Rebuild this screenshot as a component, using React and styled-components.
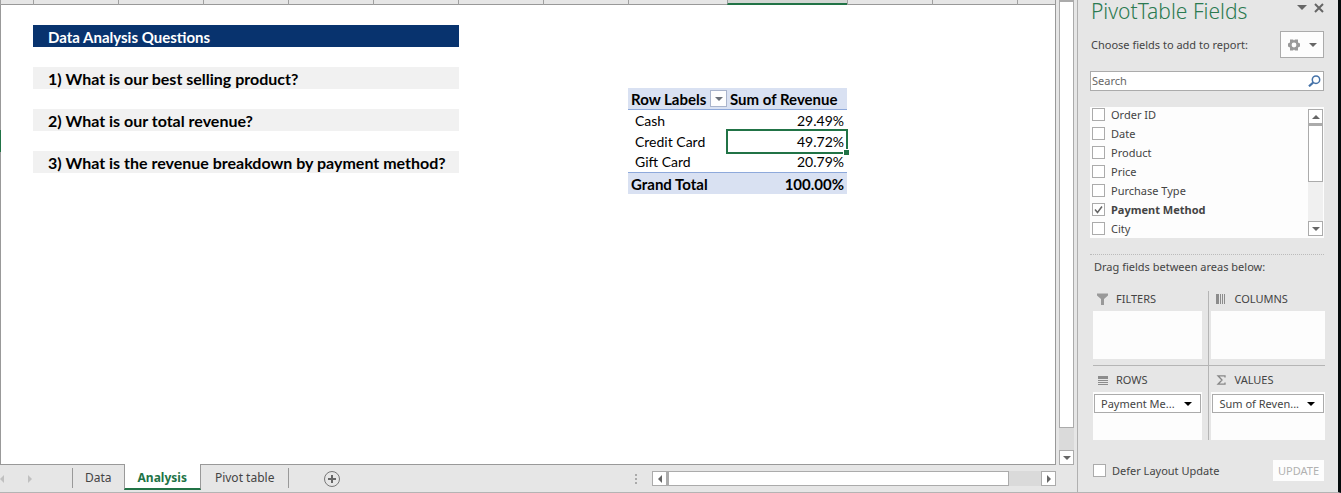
import React, { useState } from "react";
import styled, { createGlobalStyle, css } from "styled-components";

const GlobalStyle = createGlobalStyle`
  *, *::before, *::after { box-sizing: border-box; }
  body { margin: 0; background: #e6e6e6; }
  button, input { font: inherit; color: inherit; margin: 0; }
  h1, h2, h3, p, ul { margin: 0; padding: 0; font-size: inherit; font-weight: normal; }
`;

const ui = `"Noto Sans", "Open Sans", sans-serif`;
const cellFont = `Lato, "Open Sans", sans-serif`;
const green = "#217346";
const columns = "33px repeat(7, 85px) 99px 120px 85px 85px minmax(0, 1fr)";

const Window = styled.div`
  display: flex;
  min-height: 100vh;
  background: #e6e6e6;
  border-right: 3px solid #050a0c;
  border-bottom: 1px solid #b4b4b4;
  font: 12px/16px ${ui};
  color: #444;
`;

const Workbook = styled.main`
  flex: 1;
  min-width: 0;
  display: flex;
  flex-direction: column;
`;

const SheetArea = styled.div`
  flex: 1;
  display: flex;
`;

const Sheet = styled.div`
  flex: 1;
  min-width: 0;
  display: flex;
  flex-direction: column;
  border: solid #999;
  border-width: 0 1px 1px 0;
`;

const HeaderStrip = styled.div`
  display: grid;
  grid-template-columns: ${columns};
  height: 5px;
  border-bottom: 1px solid #999;
`;

const HeaderCell = styled.div`
  border-left: 1px solid #a0a0a0;
  ${(p) =>
    p.$selected &&
    css`
      height: 5px;
      background: #d2d6d3;
      border-bottom: 2px solid ${green};
    `}
`;

const Cells = styled.div`
  flex: 1;
  display: grid;
  grid-template-columns: ${columns};
  align-items: start;
  background: #fff;
  box-shadow: inset 1px 0 #999;
  color: #000;
  font: 15px/20px ${cellFont};
`;

const ActiveRowMark = styled.div`
  grid-column: 1;
  width: 1px;
  height: 22px;
  margin-top: 125px;
  background: ${green};
`;

const Questions = styled.section`
  grid-column: 2 / span 5;
  display: grid;
  gap: 20px;
  margin: 20px -1px 0 0;
`;

const Question = styled.p`
  height: 22px;
  padding: 2px 0 0 15px;
  font-size: 16px;
  font-weight: bold;
  background: #f1f1f1;
  white-space: nowrap;
`;

const QuestionsTitle = styled(Question).attrs({ as: "h2" })`
  font-size: 15px;
  background: #08336e;
  color: #fff;
`;

const Pivot = styled.table`
  grid-column: 9 / span 2;
  width: 219px;
  margin: 83px 0 0;
  border-collapse: separate;
  border-spacing: 0;
  table-layout: fixed;

  th, td { height: 21px; padding: 0 3px; line-height: 20px; white-space: nowrap; }
  th { text-align: left; }
  td { text-align: right; }
  tbody { font-size: 14px; }
  tbody th { padding-left: 7px; font-weight: normal; }
  thead th, tfoot th, tfoot td { background: #d9e1f2; font-weight: bold; }
  thead th { height: 22px; border-bottom: 1px solid #8ea9db; }
  tbody tr:last-child > * { border-bottom: 1px solid #8ea9db; }
`;

const LabelHead = styled.div`
  display: flex;
  justify-content: space-between;
  align-items: center;
`;

const FilterButton = styled.button`
  display: grid;
  place-items: center;
  width: 17px;
  height: 17px;
  margin-right: -3px;
  padding: 0;
  background: #fdfdfe;
  border: 1px solid #a9b4cc;
`;

const ActiveCell = styled.td`
  position: relative;

  &::before {
    content: "";
    position: absolute;
    inset: -2px -1px -2px -1px;
    border: 2px solid ${green};
  }
  &::after {
    content: "";
    position: absolute;
    right: -2px;
    bottom: -3px;
    width: 6px;
    height: 6px;
    background: ${green};
    border: solid #fff;
    border-width: 1px 0 0 1px;
  }
`;

const VScroll = styled.div`
  display: flex;
  flex-direction: column;
  width: 15px;
  flex: none;
  margin: ${(p) => p.$margin || "0"};
  background: ${(p) => p.$track || "#dadada"};
`;

const HScroll = styled.div`
  display: flex;
  width: 404px;
  height: 15px;
  background: #dadada;
`;

const Thumb = styled.div`
  flex: 0 0 ${(p) => p.$size};
  background: #fff;
  border: 1px solid #ababab;
  ${(p) => (p.$horizontal ? "border-left-width: 2px;" : "border-top-width: 2px;")}
`;

const Filler = styled.div`
  flex: 1;
`;

const ScrollButton = styled.button`
  display: grid;
  place-items: center;
  flex: none;
  width: 15px;
  height: 15px;
  padding: 0;
  background: #fff;
  border: 1px solid #ababab;
`;

const TabBar = styled.nav`
  display: flex;
  height: 27px;
  padding-right: 21px;
`;

const TabArrows = styled.div`
  display: flex;
  width: 72px;
  align-items: center;
  gap: 24px;
`;

const ArrowButton = styled.button`
  display: flex;
  padding: 0;
  border: 0;
  background: none;
`;

const Tab = styled.button`
  padding: 0 ${(p) => (p.$edge === "right" ? "14px" : "12px")};
  margin: 3px 0 4px;
  border: solid #999;
  border-width: 0 ${(p) => (p.$edge === "right" ? "1px" : "0")} 0 ${(p) => (p.$edge === "left" ? "1px" : "0")};
  background: none;
  ${(p) =>
    p.$active &&
    css`
      margin: -1px 0 2px;
      padding: 3px 13px 0;
      background: #fff;
      border-width: 0 1px 2px;
      border-bottom-color: ${green};
      color: ${green};
      font-weight: bold;
    `}
`;

const AddSheet = styled.button`
  display: flex;
  align-items: center;
  margin-left: 34px;
  padding: 0;
  border: 0;
  background: none;
`;

const TabBarEnd = styled.div`
  display: flex;
  align-items: center;
  gap: 15px;
  margin-left: auto;
`;

const Pane = styled.aside`
  flex: none;
  width: 261px;
  padding: 0 14px 0 12px;
  border-left: 1px solid #b0b0b0;
  font-size: 11px;
`;

const PaneHead = styled.header`
  display: flex;
  justify-content: space-between;
  height: 22px;
`;

const PaneTitle = styled.h1`
  padding-left: 1px;
  font-size: 21px;
  font-weight: 300;
  line-height: 22px;
  color: #2b7a50;
  white-space: nowrap;
`;

const PaneActions = styled.div`
  display: flex;
  align-items: center;
  gap: 7px;
  height: 15px;
`;

const ChooseRow = styled.div`
  display: flex;
  justify-content: space-between;
  align-items: center;
  margin: 9px 0 13px;
  padding-left: 1px;
`;

const GearButton = styled.button`
  display: flex;
  align-items: center;
  justify-content: center;
  gap: 8px;
  width: 44px;
  height: 27px;
  padding: 0;
  background: #fdfdfd;
  border: 1px solid #ababab;
`;

const SearchBox = styled.label`
  display: flex;
  align-items: center;
  height: 20px;
  padding: 0 2px 0 1px;
  background: #fff;
  border: 1px solid #ababab;
`;

const SearchInput = styled.input`
  flex: 1;
  min-width: 0;
  height: 16px;
  padding: 0;
  border: 0;
  outline: 0;
  background: none;
  &::placeholder { color: #666; opacity: 1; }
`;

const FieldList = styled.div`
  display: flex;
  justify-content: space-between;
  height: 131px;
  margin: 16px 0;
  padding: 0 1px 0 2px;
  background: #fdfdfd;
  overflow: hidden;
`;

const FieldRows = styled.div`
  display: grid;
  align-content: start;
  gap: 4px;
`;

const Check = styled.label`
  display: flex;
  align-items: center;
  gap: 6px;
  height: 15px;
  font-weight: ${(p) => (p.$bold ? "bold" : "normal")};
  white-space: nowrap;
`;

const CheckMark = styled.span`
  display: grid;
  width: 13px;
  height: 13px;

  > * { grid-area: 1 / 1; }
  svg { visibility: hidden; pointer-events: none; }
  input:checked + svg { visibility: visible; }
`;

const CheckInput = styled.input`
  appearance: none;
  width: 13px;
  height: 13px;
  background: #fff;
  border: 1px solid #ababab;
`;

const DragHint = styled.p`
  padding: 4px 4px 16px;
  border-top: 1px dotted #bbb;
`;

const Areas = styled.div`
  display: grid;
  grid-template-columns: 115fr 116fr;
  margin: 0 -1px 20px 3px;
`;

const Area = styled.section`
  padding: ${(p) => (p.$bottom ? "6px 0 0" : "0 0 6px")};
  ${(p) => (p.$right ? "padding-left: 2px; border-left: 1px solid #b5b5b5;" : "padding-right: 6px;")}
  ${(p) => p.$bottom && "border-top: 1px solid #b5b5b5;"}
`;

const AreaTitle = styled.h3`
  display: flex;
  align-items: center;
  gap: 6px;
  height: 20px;
  padding: 0 0 4px 3px;

  svg { width: 14px; }
`;

const DropZone = styled.div`
  height: 48px;
  padding: 2px 1px;
  background: #fdfdfd;
`;

const FieldChip = styled.button`
  display: flex;
  align-items: center;
  justify-content: space-between;
  width: 100%;
  height: 19px;
  padding: 0 8px 0 6px;
  background: #fff;
  border: 1px solid #ababab;
  white-space: nowrap;
`;

const PaneFoot = styled.footer`
  display: flex;
  justify-content: space-between;
  align-items: center;
  padding-left: 3px;
`;

const UpdateButton = styled.button`
  height: 21px;
  width: 51px;
  padding: 0;
  border: 0;
  background: #fdfdfd;
  color: #b1b1b1;
`;

const paths = {
  down: "M0 0h8L4 4z",
  up: "M0 4h8L4 0z",
  left: "M4 0v8L0 4z",
  right: "M0 0v8l4-4z",
};

function Triangle({ dir = "down", color = "#666", size = 8 }) {
  const side = dir === "left" || dir === "right";
  return (
    <svg
      width={side ? size / 2 : size}
      height={side ? size : size / 2}
      viewBox={side ? "0 0 4 8" : "0 0 8 4"}
      aria-hidden="true"
    >
      <path d={paths[dir]} fill={color} />
    </svg>
  );
}

function CheckField({ label, defaultChecked = false, boldWhenOn }) {
  const [on, setOn] = useState(defaultChecked);
  return (
    <Check $bold={boldWhenOn && on}>
      <CheckMark>
        <CheckInput type="checkbox" checked={on} onChange={(e) => setOn(e.target.checked)} />
        <svg width="13" height="13" viewBox="0 0 13 13" aria-hidden="true">
          <path d="M3 6.5L5.5 9.5L10 3.5" fill="none" stroke="#666" strokeWidth="1.5" />
        </svg>
      </CheckMark>
      {label}
    </Check>
  );
}

const fields = ["Order ID", "Date", "Product", "Price", "Purchase Type", "Payment Method", "City"];

const icons = {
  filter: (
    <svg height="12" viewBox="0 0 14 12" aria-hidden="true">
      <path d="M1 0.5h11v2L8 6v6H5V6L1 2.5z" fill="#999" />
    </svg>
  ),
  columns: (
    <svg height="10" viewBox="0 0 14 10" aria-hidden="true">
      <path d="M2 0h3v10H2zM6 0h1v10H6zM8 0h1v10H8zM10 0h1v10h-1z" fill="#8c8c8c" />
    </svg>
  ),
  rows: (
    <svg height="9" viewBox="0 0 14 9" aria-hidden="true">
      <path d="M2 0h10v3H2zM2 4h10v1H2zM2 6h10v1H2zM2 8h10v1H2z" fill="#8c8c8c" />
    </svg>
  ),
  values: (
    <svg height="10" viewBox="0 0 14 10" aria-hidden="true">
      <path d="M11 2.5V.8H4L8 5L4 9.2h7V7.5" fill="none" stroke="#888" strokeWidth="1.3" />
    </svg>
  ),
};

export default function App() {
  return (
    <Window>
      <GlobalStyle />
      <Workbook>
        <SheetArea>
          <Sheet>
            <HeaderStrip>
              {Array.from({ length: 13 }, (_, i) => (
                <HeaderCell key={i} $selected={i === 9} />
              ))}
            </HeaderStrip>
            <Cells>
              <ActiveRowMark />
              <Questions>
                <QuestionsTitle>Data Analysis Questions</QuestionsTitle>
                <Question>1) What is our best selling product?</Question>
                <Question>2) What is our total revenue?</Question>
                <Question>3) What is the revenue breakdown by payment method?</Question>
              </Questions>
              <Pivot>
                <colgroup>
                  <col width="99" />
                  <col width="120" />
                </colgroup>
                <thead>
                  <tr>
                    <th scope="col">
                      <LabelHead>
                        Row Labels
                        <FilterButton aria-label="Filter row labels">
                          <Triangle color="#6b7078" />
                        </FilterButton>
                      </LabelHead>
                    </th>
                    <th scope="col">Sum of Revenue</th>
                  </tr>
                </thead>
                <tbody>
                  <tr><th scope="row">Cash</th><td>29.49%</td></tr>
                  <tr><th scope="row">Credit Card</th><ActiveCell>49.72%</ActiveCell></tr>
                  <tr><th scope="row">Gift Card</th><td>20.79%</td></tr>
                </tbody>
                <tfoot>
                  <tr><th scope="row">Grand Total</th><td>100.00%</td></tr>
                </tfoot>
              </Pivot>
            </Cells>
          </Sheet>
          <VScroll $margin="0 3px">
            <Thumb $size="92%" />
            <Filler />
            <ScrollButton aria-label="Scroll down"><Triangle /></ScrollButton>
          </VScroll>
        </SheetArea>
        <TabBar>
          <TabArrows>
            <ArrowButton aria-label="Previous sheet"><Triangle dir="left" color="#c0c0c0" /></ArrowButton>
            <ArrowButton aria-label="Next sheet"><Triangle dir="right" color="#c0c0c0" /></ArrowButton>
          </TabArrows>
          <Tab $edge="left">Data</Tab>
          <Tab $active>Analysis</Tab>
          <Tab $edge="right">Pivot table</Tab>
          <AddSheet aria-label="New sheet">
            <svg width="18" height="18" viewBox="0 0 18 18" aria-hidden="true">
              <circle cx="9" cy="9" r="7.5" fill="none" stroke="#777" />
              <path d="M9 5v8M5 9h8" stroke="#666" strokeWidth="2" />
            </svg>
          </AddSheet>
          <TabBarEnd>
            <svg width="2" height="10" viewBox="0 0 2 10" aria-hidden="true">
              <path d="M0 0h2v2H0zM0 4h2v2H0zM0 8h2v2H0z" fill="#aaa" />
            </svg>
            <HScroll>
              <ScrollButton aria-label="Scroll left"><Triangle dir="left" /></ScrollButton>
              <Thumb $horizontal $size="342px" />
              <Filler />
              <ScrollButton aria-label="Scroll right"><Triangle dir="right" /></ScrollButton>
            </HScroll>
          </TabBarEnd>
        </TabBar>
      </Workbook>

      <Pane>
        <PaneHead>
          <PaneTitle>PivotTable Fields</PaneTitle>
          <PaneActions>
            <ArrowButton aria-label="Pane options"><Triangle size={10} /></ArrowButton>
            <ArrowButton aria-label="Close pane">
              <svg width="10" height="10" viewBox="0 0 10 10" aria-hidden="true">
                <path d="M1 1l8 8M9 1L1 9" stroke="#666" strokeWidth="2" />
              </svg>
            </ArrowButton>
          </PaneActions>
        </PaneHead>
        <ChooseRow>
          <span>Choose fields to add to report:</span>
          <GearButton aria-label="Tools">
            <svg width="14" height="12" viewBox="0 0 14 12" aria-hidden="true">
              <path
                fill="#999"
                fillRule="evenodd"
                d="M3 0.5h3l1 1l1-1h3v3l2 1v3l-2 1v3H8l-1-1l-1 1H3v-3l-2-1v-3l2-1zM7 3.6a2.4 2.4 0 1 0 0 4.8a2.4 2.4 0 1 0 0-4.8z"
              />
            </svg>
            <Triangle />
          </GearButton>
        </ChooseRow>
        <SearchBox>
          <SearchInput type="text" placeholder="Search" aria-label="Search fields" />
          <svg width="13" height="12" viewBox="0 0 13 12" aria-hidden="true">
            <circle cx="8" cy="4.7" r="3.7" fill="none" stroke="#4472a8" strokeWidth="1.5" />
            <path d="M5.2 7.5L1 11.3" stroke="#4472a8" strokeWidth="2.2" />
          </svg>
        </SearchBox>
        <FieldList>
          <FieldRows>
            {fields.map((f) => (
              <CheckField key={f} label={f} boldWhenOn defaultChecked={f === "Payment Method"} />
            ))}
          </FieldRows>
          <VScroll $margin="2px 0" $track="#f0f0f0">
            <ScrollButton aria-label="Scroll fields up"><Triangle dir="up" /></ScrollButton>
            <Thumb $size="58px" />
            <Filler />
            <ScrollButton aria-label="Scroll fields down"><Triangle /></ScrollButton>
          </VScroll>
        </FieldList>
        <DragHint>Drag fields between areas below:</DragHint>
        <Areas>
          <Area>
            <AreaTitle>{icons.filter}FILTERS</AreaTitle>
            <DropZone />
          </Area>
          <Area $right>
            <AreaTitle>{icons.columns}COLUMNS</AreaTitle>
            <DropZone />
          </Area>
          <Area $bottom>
            <AreaTitle>{icons.rows}ROWS</AreaTitle>
            <DropZone>
              <FieldChip>Payment Me...<Triangle color="#000" /></FieldChip>
            </DropZone>
          </Area>
          <Area $bottom $right>
            <AreaTitle>{icons.values}VALUES</AreaTitle>
            <DropZone>
              <FieldChip>Sum of Reven...<Triangle color="#000" /></FieldChip>
            </DropZone>
          </Area>
        </Areas>
        <PaneFoot>
          <CheckField label="Defer Layout Update" />
          <UpdateButton disabled>UPDATE</UpdateButton>
        </PaneFoot>
      </Pane>
    </Window>
  );
}
